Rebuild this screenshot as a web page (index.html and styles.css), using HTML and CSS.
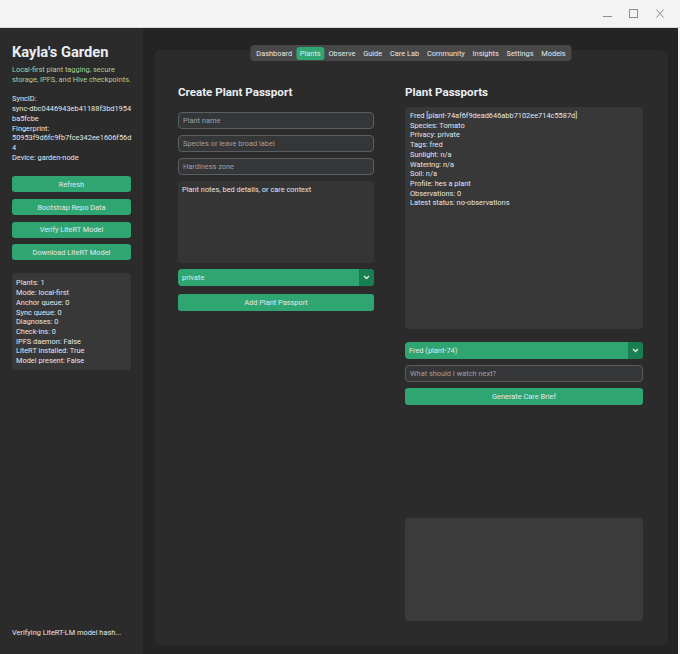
FILE: index.html
```html
<!DOCTYPE html>
<html lang="en">
<head>
    <meta charset="UTF-8">
    <meta name="viewport" content="width=device-width, initial-scale=1.0">
    <title>Kayla's Garden</title>
    <link rel="stylesheet" href="styles.css">
</head>
<body>
    <div class="titlebar">
        <div class="win-btn">
            <svg width="9" height="9" viewBox="0 0 9 9"><path d="M0 7.5h9" stroke="#8d8d8d" stroke-width="1"/></svg>
        </div>
        <div class="win-btn">
            <svg width="9" height="9" viewBox="0 0 9 9"><rect x="0.5" y="0.5" width="8" height="8" fill="none" stroke="#8d8d8d" stroke-width="1"/></svg>
        </div>
        <div class="win-btn close">
            <svg width="8" height="9" viewBox="0 0 8 9"><path d="M0.5 0.5l7 8M7.5 0.5l-7 8" stroke="#8d8d8d" stroke-width="1"/></svg>
        </div>
    </div>

    <div class="app">
        <aside class="sidebar">
            <h1 class="brand">Kayla's Garden</h1>
            <p class="tagline">Local-first plant tagging, secure storage, IPFS, and Hive checkpoints.</p>
            <div class="identity">
                <div>SyncID:</div>
                <div>sync-dbc0446943eb41188f3bd1954</div>
                <div>ba5fcbe</div>
                <div>Fingerprint:</div>
                <div>50953f9d6fc9fb7fce342ee1606f56d</div>
                <div>4</div>
                <div>Device: garden-node</div>
            </div>
            <div class="actions">
                <button class="btn">Refresh</button>
                <button class="btn">Bootstrap Repo Data</button>
                <button class="btn">Verify LiteRT Model</button>
                <button class="btn">Download LiteRT Model</button>
            </div>
            <div class="stats">
                <div>Plants: 1</div>
                <div>Mode: local-first</div>
                <div>Anchor queue: 0</div>
                <div>Sync queue: 0</div>
                <div>Diagnoses: 0</div>
                <div>Check-ins: 0</div>
                <div>IPFS daemon: False</div>
                <div>LiteRT installed: True</div>
                <div>Model present: False</div>
            </div>
            <div class="status">Verifying LiteRT-LM model hash...</div>
        </aside>

        <main class="main">
            <div class="tabview">
                <nav class="tabs">
                    <span class="tab">Dashboard</span>
                    <span class="tab tab-active">Plants</span>
                    <span class="tab">Observe</span>
                    <span class="tab">Guide</span>
                    <span class="tab">Care Lab</span>
                    <span class="tab">Community</span>
                    <span class="tab">Insights</span>
                    <span class="tab">Settings</span>
                    <span class="tab">Models</span>
                </nav>

                <div class="columns">
                    <section class="col">
                        <h2 class="heading">Create Plant Passport</h2>
                        <div class="entry placeholder first">Plant name</div>
                        <div class="entry placeholder">Species or leave broad label</div>
                        <div class="entry placeholder">Hardiness zone</div>
                        <div class="textbox notes">Plant notes, bed details, or care context</div>
                        <div class="option">
                            <span class="option-label">private</span>
                            <span class="option-arrow">
                                <svg width="7" height="5" viewBox="0 0 7 5"><path d="M1 1l2.5 2.5L6 1" fill="none" stroke="#e6ece8" stroke-width="1.3"/></svg>
                            </span>
                        </div>
                        <button class="btn wide add">Add Plant Passport</button>
                    </section>

                    <section class="col">
                        <h2 class="heading">Plant Passports</h2>
                        <div class="textbox passports">
                            <div>Fred [plant-74af6f9dead646abb7102ee714c5587d]</div>
                            <div>Species: Tomato</div>
                            <div>Privacy: private</div>
                            <div>Tags: fred</div>
                            <div>Sunlight: n/a</div>
                            <div>Watering: n/a</div>
                            <div>Soil: n/a</div>
                            <div>Profile: hes a plant</div>
                            <div>Observations: 0</div>
                            <div>Latest status: no-observations</div>
                        </div>
                        <div class="option pick">
                            <span class="option-label">Fred (plant-74)</span>
                            <span class="option-arrow">
                                <svg width="7" height="5" viewBox="0 0 7 5"><path d="M1 1l2.5 2.5L6 1" fill="none" stroke="#e6ece8" stroke-width="1.3"/></svg>
                            </span>
                        </div>
                        <div class="entry placeholder">What should I watch next?</div>
                        <button class="btn wide">Generate Care Brief</button>
                        <div class="textbox brief"></div>
                    </section>
                </div>
            </div>
        </main>
    </div>
</body>
</html>
```

FILE: styles.css
```css
* {
    margin: 0;
    padding: 0;
    box-sizing: border-box;
}

body {
    width: 680px;
    height: 654px;
    overflow: hidden;
    font-family: Roboto, "Liberation Sans", sans-serif;
    font-size: 7.4px;
    line-height: 9.7px;
    color: #e2e7ee;
    background: #f3f3f3;
}

.titlebar {
    height: 28px;
    background: #f3f3f3;
    border-bottom: 1px solid #dadada;
    display: flex;
    justify-content: flex-end;
    align-items: center;
    padding-right: 16px;
    gap: 17px;
}
.win-btn {
    width: 9px;
    height: 9px;
    display: flex;
}
.win-btn.close {
    width: 8px;
    margin-left: 1px;
}

.app {
    height: 626px;
    width: 678px;
    display: flex;
    background: #242424;
}

.sidebar {
    width: 143px;
    background: #2b2b2b;
    padding: 15px 12px 16px 12px;
    display: flex;
    flex-direction: column;
    white-space: nowrap;
}

.brand {
    font-size: 14.7px;
    line-height: 18px;
    font-weight: 700;
    color: #e9eef2;
}

.tagline {
    margin-top: 4px;
    color: #a9cf9e;
    white-space: normal;
}

.identity {
    margin-top: 10px;
}

.actions {
    margin-top: 14px;
    display: flex;
    flex-direction: column;
    gap: 6.7px;
}

.btn {
    height: 16px;
    border: none;
    border-radius: 3px;
    background: #2fa572;
    color: #e2e7ee;
    font-family: inherit;
    font-size: 7.4px;
    cursor: pointer;
}

.stats {
    margin-top: 13px;
    height: 97px;
    background: #383838;
    border-radius: 4px;
    padding: 5px 4px;
}

.status {
    margin-top: auto;
}

.main {
    flex: 1;
    padding: 22px 10px 9px 11px;
}

.tabview {
    position: relative;
    height: 100%;
    background: #2b2b2b;
    border-radius: 6px;
    padding: 34px 25px 0 24px;
}

.tabs {
    position: absolute;
    top: -5px;
    left: 50%;
    transform: translateX(-50%);
    height: 16px;
    display: flex;
    align-items: center;
    padding: 0 2px;
    background: #484848;
    border-radius: 4px;
    white-space: nowrap;
    font-size: 7.4px;
}
.tab {
    padding: 0 3.9px;
    height: 13px;
    line-height: 13px;
    border-radius: 3px;
}
.tab-active {
    background: #2fa572;
}

.columns {
    display: grid;
    grid-template-columns: 196px 238px;
    gap: 31px;
}

.col {
    display: flex;
    flex-direction: column;
}

.heading {
    font-size: 11.6px;
    line-height: 16px;
    font-weight: 700;
    color: #e9eef2;
}

.entry {
    height: 17px;
    margin-top: 6px;
    border: 1px solid #5b5e60;
    border-radius: 4px;
    background: #343638;
    padding: 0 4px;
    line-height: 15px;
}
.entry.first {
    margin-top: 12px;
}
.placeholder {
    color: #a0a0a0;
}

.textbox {
    background: #383838;
    border-radius: 4px;
    padding: 4px;
}
.notes {
    margin-top: 6px;
    height: 82px;
    background: #353535;
    padding-top: 4px;
}
.passports {
    margin-top: 7px;
    height: 222px;
    padding: 4px 5px;
}
.brief {
    margin-top: 113px;
    height: 103px;
    background: #3b3b3b;
}

.option {
    height: 17px;
    margin-top: 6px;
    display: flex;
    border-radius: 4px;
    overflow: hidden;
    background: #2fa572;
}
.option-label {
    flex: 1;
    padding-left: 4px;
    line-height: 17px;
}
.option-arrow {
    width: 15px;
    background: #187f52;
    display: flex;
    align-items: center;
    justify-content: center;
}
.pick {
    margin-top: 13px;
}

.wide {
    height: 17px;
    margin-top: 6px;
}
.add {
    margin-top: 8px;
}
```
